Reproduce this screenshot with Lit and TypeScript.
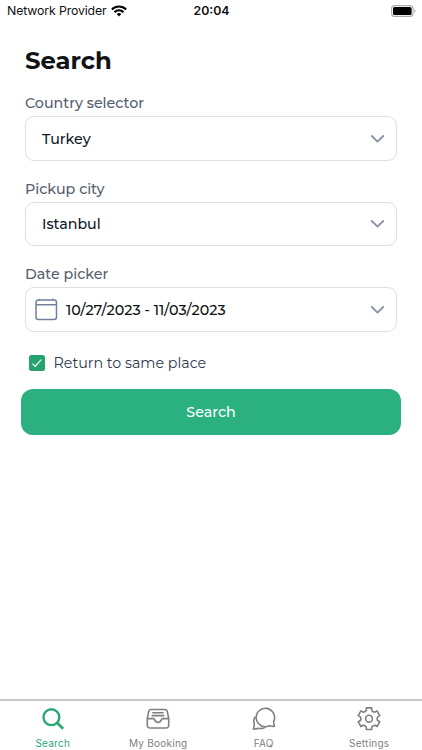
import { LitElement, html, css, svg } from "lit";
import { customElement, property } from "lit/decorators.js";

const chevron = html`<svg class="chev" width="16" height="10" viewBox="0 0 16 10" fill="none" stroke="#8c93a8" stroke-width="1.9" stroke-linecap="round" stroke-linejoin="round"><path d="M1.800 2l5.700 5.700 5.700-5.700"/></svg>`;

@customElement("status-bar")
class StatusBar extends LitElement {
  static styles = css`
    :host { display: grid; grid-template-columns: 1fr auto 1fr; align-items: center; height: 22px; padding: 0 6px 0 7px; font: 500 12.3px/22px Inter, sans-serif; color: #111; }
    .net { display: flex; align-items: center; gap: 5px; font-weight: 400; }
    .name { width: 99px; white-space: nowrap; letter-spacing: -0.12px; }
    .time { font-weight: 600; letter-spacing: 0; }
    .bat { justify-self: end; display: block; }
  `;
  render() {
    return html`<div class="net"><span class="name">Network Provider</span>
      <svg width="16" height="12" viewBox="0 0 16 12"><g fill="none" stroke="#000" stroke-width="2.1"><path d="M.9 4.4a10 10 0 0 1 14.2 0"/><path d="M3.5 7.2a6.3 6.3 0 0 1 9 0"/></g><path d="M5.7 9.1a3.3 3.3 0 0 1 4.6 0L8 11.4z"/></svg></div>
      <span class="time">20:04</span>
      <svg class="bat" width="25" height="12" viewBox="0 0 25 12"><rect x=".6" y=".6" width="21.4" height="10.8" rx="3" fill="#fff" stroke="#aaa" stroke-width="1.1"/><rect x="2" y="2" width="18.6" height="8" rx="1.6"/><path d="M23.4 4.3c1.5.6 1.5 2.8 0 3.4z" fill="#999"/></svg>`;
  }
}

@customElement("select-field")
class SelectField extends LitElement {
  @property() label = "";
  @property() value = "";
  @property() kind = "";
  static styles = css`
    :host { display: block; height: 85.5px; font-family: Montserrat, Inter, sans-serif; }
    .label { height: 27.4px; font-size: 14.25px; font-weight: 500; line-height: 28px; color: #565e70; }
    .box { box-sizing: border-box; height: 44.6px; border: 1px solid #dcdfe6; border-radius: 9px; display: flex; align-items: center; padding: 0 10px 0 16px; font-size: 14.25px; font-weight: 500; color: #101828; }
    .date { padding-left: 9px; color: #111; }
    .text { flex: 1; white-space: nowrap; }
    .cal { margin-right: 8px; }
    .chev { display: block; }
  `;
  render() {
    const date = this.kind === "date";
    return html`<div class="label">${this.label}</div>
      <div class="box ${this.kind}">
        ${date ? html`<svg class="cal" width="23" height="23" viewBox="0 0 23 23" fill="none" stroke="#73809a" stroke-width="1.5"><rect x="1" y="2" width="20.5" height="19.5" rx="2.5"/><path d="M1 6.8h20.5M4.5 .7v1.5M18 .7v1.5"/></svg>` : ""}
        <span class="text">${this.value}</span>${chevron}
      </div>`;
  }
}

// Outline of a six-toothed cog centred on (12, 11.7).
const cogPath = (): string => {
  const at = (deg: number, r: number) => {
    const a = (deg * Math.PI) / 180;
    return `${(12 + r * Math.sin(a)).toFixed(2)} ${(11.7 - r * Math.cos(a)).toFixed(2)}`;
  };
  let d = "";
  for (let i = 0; i < 6; i++) {
    const t = i * 60;
    d += `${i ? "L" : "M"}${at(t - 18, 8.8)}L${at(t - 14, 11.2)}L${at(t + 14, 11.2)}L${at(t + 18, 8.8)}Q${at(t + 30, 7.6)} ${at(t + 42, 8.8)}`;
  }
  return d + "Z";
};

const icons: Record<string, unknown> = {
  search: svg`<g stroke-width="2.4"><circle cx="10.4" cy="10.2" r="7.9"/><path d="M16 15.800l6.200 6" stroke-width="2.700"/></g>`,
  booking: svg`<path d="M5 2.500h14a2.400 2.400 0 0 1 2.200 1.700L22.700 11.400v7a2.600 2.600 0 0 1-2.600 2.600H3.900a2.600 2.600 0 0 1-2.600-2.600v-7L2.800 4.200A2.400 2.400 0 0 1 5 2.500zM1.500 11.600h6.200c1 0 .8 3.900 4.300 3.900s3.300-3.900 4.300-3.900h6.200M6.300 5.700h11.400M5.600 8.600h12.800"/>`,
  faq: svg`<path transform="translate(0 -.6)" d="M21.700 15a9.200 9.200 0 1 0-4.200 4.300q2.500.8 5 .6-.9-2.400-.8-4.900zM3 10.500c-2 3-1.300 5.300-.7 7.300q0 2.600-1 4.800 2.600.1 4.700-.8c2.500.7 5 .5 7.200-.8"/>`,
  settings: svg`<circle cx="12" cy="11.700" r="3.400"/><path d="${cogPath()}"/>`,
};

@customElement("tab-item")
class TabItem extends LitElement {
  @property() icon = "";
  @property() label = "";
  static styles = css`
    :host { flex: 1 1 0; display: flex; flex-direction: column; align-items: center; padding-top: 6px; color: #808080; font: 400 10px/14px Inter, sans-serif; letter-spacing: .25px; }
    :host([active]) { color: #2ca876; }
    svg { display: block; margin-bottom: 5px; fill: none; stroke: currentColor; stroke-width: 1.6; stroke-linejoin: round; }
  `;
  render() {
    return html`<svg width="24" height="24" viewBox="0 0 24 24">${icons[this.icon]}</svg><span>${this.label}</span>`;
  }
}

@customElement("app-root")
class AppRoot extends LitElement {
  static styles = css`
    :host { display: flex; flex-direction: column; height: 750px; background: #fff; font-family: Montserrat, Inter, sans-serif; }
    main { flex: 1; padding: 20px 25px 0; }
    h1 { margin: 0; font-size: 24.3px; line-height: 36px; height: 47px; font-weight: 700; color: #111417; }
    .check { display: flex; align-items: center; height: 16px; padding-left: 4px; gap: 8.5px; font-size: 14.25px; color: #30384c; margin-top: 9px; }
    .tick { display: block; }
    .button { height: 46px; margin: 18.5px -3.7px 0; border-radius: 12px; background: #2bb17f; color: #fff; display: flex; align-items: center; justify-content: center; font-size: 14.25px; font-weight: 500; }
    nav { display: flex; height: 49px; border-top: 2px solid #c8c8c8; }
  `;
  render() {
    return html`<status-bar></status-bar>
      <main>
        <h1>Search</h1>
        <select-field label="Country selector" value="Turkey"></select-field>
        <select-field label="Pickup city" value="Istanbul"></select-field>
        <select-field label="Date picker" value="10/27/2023 - 11/03/2023" kind="date"></select-field>
        <div class="check"><svg class="tick" width="16" height="16" viewBox="0 0 16 16"><rect width="16" height="16" rx="2.500" fill="#25a36c"/><path d="M3.500 8.700l2.700 2.700 6-6.800" fill="none" stroke="#fff" stroke-width="1.200"/></svg><span>Return to same place</span></div>
        <div class="button">Search</div>
      </main>
      <nav>
        <tab-item active icon="search" label="Search"></tab-item>
        <tab-item icon="booking" label="My Booking"></tab-item>
        <tab-item icon="faq" label="FAQ"></tab-item>
        <tab-item icon="settings" label="Settings"></tab-item>
      </nav>`;
  }
}
